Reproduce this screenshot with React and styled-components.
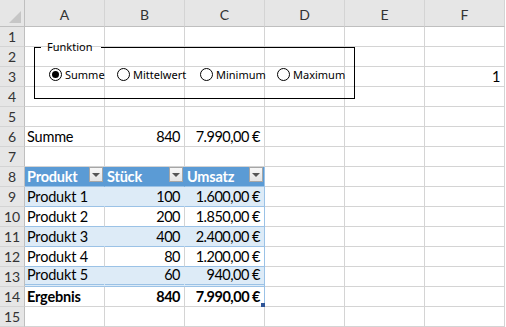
import React from 'react';
import styled, {createGlobalStyle} from 'styled-components';

const GlobalStyle = createGlobalStyle`
  html, body {
    margin: 0;
    padding: 0;
    background: #fff;
    overflow: hidden;
  }
`;

const COLS = ['A', 'B', 'C', 'D', 'E', 'F'];
const GRID = '#d4d4d4';
const TABLE_LINE = '#9bc2e6';

const Wrap = styled.div`
  position: relative;
  width: 506px;
  height: 327px;
  font-family: Lato, "Liberation Sans", sans-serif;
`;

const Sheet = styled.div`
  display: grid;
  grid-template-columns: 25px repeat(6, 80px);
  grid-template-rows: 27px repeat(15, 20px);
`;

const Corner = styled.div`
  position: relative;
  background: #e6e6e6;
  border-right: 1px solid #bfbfbf;
  border-bottom: 1px solid #bfbfbf;
  box-sizing: border-box;

  &::after {
    content: '';
    position: absolute;
    right: 3px;
    bottom: 3px;
    border-left: 12px solid transparent;
    border-bottom: 12px solid #c6c6c6;
  }
`;

const ColHead = styled.div`
  display: flex;
  align-items: center;
  justify-content: center;
  padding-top: 2px;
  background: #e6e6e6;
  border-right: 1px solid ${GRID};
  border-bottom: 1px solid #bfbfbf;
  box-sizing: border-box;
  font-size: 14px;
  color: #333;
`;

const RowHead = styled.div`
  display: flex;
  align-items: flex-end;
  justify-content: center;
  padding-bottom: 1px;
  background: #e6e6e6;
  border-right: 1px solid #bfbfbf;
  border-bottom: 1px solid ${GRID};
  box-sizing: border-box;
  font-size: 14px;
  color: #333;
`;

const Cell = styled.div`
  position: relative;
  display: flex;
  align-items: flex-end;
  justify-content: ${p => (p.$right ? 'flex-end' : 'flex-start')};
  padding: 0 4px 1px 2px;
  box-sizing: border-box;
  background: ${p => p.$fill || '#fff'};
  border-right: 1px solid ${p => p.$vline || GRID};
  border-bottom: ${p => p.$hline || `1px solid ${GRID}`};
  font-size: 14.5px;
  letter-spacing: ${p => (p.$right ? '-0.5px' : '-0.2px')};
  font-weight: ${p => (p.$bold ? 700 : 400)};
  color: ${p => p.$color || '#000'};
  white-space: nowrap;
`;

const Filter = styled.span`
  position: absolute;
  top: 0;
  right: 1px;
  width: 14px;
  height: 15px;
  box-sizing: border-box;
  border: 1px solid #a6a6a6;
  background: linear-gradient(#f7f7f7, #e4e4e4);
  display: flex;
  align-items: center;
  justify-content: center;

  &::after {
    content: '';
    border-left: 4px solid transparent;
    border-right: 4px solid transparent;
    border-top: 4px solid #555;
  }
`;

const Handle = styled.span`
  position: absolute;
  right: -1px;
  bottom: -1px;
  width: 4px;
  height: 4px;
  background: #2f5597;
`;

const Frame = styled.fieldset`
  position: absolute;
  left: 34px;
  top: 41px;
  width: 321px;
  height: 58px;
  margin: 0;
  padding: 0 0 0 14px;
  box-sizing: border-box;
  border: 1px solid #000;
  display: flex;
  align-items: center;
  font-family: "Noto Sans", "Open Sans", sans-serif;
  font-size: 11px;
  color: #000;
`;

const Legend = styled.legend`
  padding: 0 9px 0 6px;
  margin-left: -8px;
  line-height: 12px;
`;

const Option = styled.label`
  display: flex;
  align-items: center;
  gap: 3px;
  width: ${p => p.$w}px;
  margin-top: -2px;
`;

const Radio = styled.span`
  width: 13px;
  height: 13px;
  box-sizing: border-box;
  border: 1px solid #000;
  border-radius: 50%;
  display: flex;
  align-items: center;
  justify-content: center;

  &::after {
    content: '';
    width: 7px;
    height: 7px;
    border-radius: 50%;
    background: ${p => (p.$on ? '#000' : 'transparent')};
  }
`;

const products = [
  ['Produkt 1', '100', '1.600,00 €'],
  ['Produkt 2', '200', '1.850,00 €'],
  ['Produkt 3', '400', '2.400,00 €'],
  ['Produkt 4', '80', '1.200,00 €'],
  ['Produkt 5', '60', '940,00 €'],
];

function rowCells(r) {
  const cells = [];
  const blank = i => <Cell key={`${r}-${i}`} />;

  if (r === 3) {
    for (let i = 0; i < 5; i++) cells.push(blank(i));
    cells.push(<Cell key="3-5" $right>1</Cell>);
    return cells;
  }
  if (r === 6) {
    cells.push(<Cell key="6-0">Summe</Cell>);
    cells.push(<Cell key="6-1" $right>840</Cell>);
    cells.push(<Cell key="6-2" $right>7.990,00 €</Cell>);
  } else if (r === 8) {
    ['Produkt', 'Stück', 'Umsatz'].forEach((h, i) => (
      cells.push(
        <Cell key={`8-${i}`} $fill="#5b9bd5" $color="#fff" $bold
          $vline={i === 2 ? TABLE_LINE : '#5b9bd5'} $hline={`1px solid ${TABLE_LINE}`}>
          {h}<Filter />
        </Cell>
      )
    ));
  } else if (r >= 9 && r <= 13) {
    const [name, qty, sum] = products[r - 9];
    const band = r % 2 === 1;
    const fill = band ? '#ddebf7' : '#fff';
    const hline = r === 13 ? `3px double ${TABLE_LINE}` : `1px solid ${TABLE_LINE}`;
    [name, qty, sum].forEach((v, i) => (
      cells.push(
        <Cell key={`${r}-${i}`} $fill={fill} $right={i > 0} $hline={hline}
          $vline={i === 2 ? TABLE_LINE : band ? fill : GRID}>
          {v}
        </Cell>
      )
    ));
  } else if (r === 14) {
    cells.push(<Cell key="14-0" $bold>Ergebnis</Cell>);
    cells.push(<Cell key="14-1" $bold $right>840</Cell>);
    cells.push(
      <Cell key="14-2" $bold $right $vline={TABLE_LINE}>7.990,00 €<Handle /></Cell>
    );
  } else {
    for (let i = 0; i < 3; i++) cells.push(blank(i));
  }
  for (let i = 3; i < 6; i++) cells.push(blank(i));
  return cells;
}

export default function App() {
  const rows = Array.from({length: 15}, (_, i) => i + 1);
  return (
    <Wrap>
      <GlobalStyle />
      <Sheet>
        <Corner />
        {COLS.map(c => <ColHead key={c}>{c}</ColHead>)}
        {rows.map(r => (
          <React.Fragment key={r}>
            <RowHead>{r}</RowHead>
            {rowCells(r)}
          </React.Fragment>
        ))}
      </Sheet>
      <Frame>
        <Legend>Funktion</Legend>
        <Option $w={68}><Radio $on />Summe</Option>
        <Option $w={83}><Radio />Mittelwert</Option>
        <Option $w={77}><Radio />Minimum</Option>
        <Option $w={70}><Radio />Maximum</Option>
      </Frame>
    </Wrap>
  );
}
